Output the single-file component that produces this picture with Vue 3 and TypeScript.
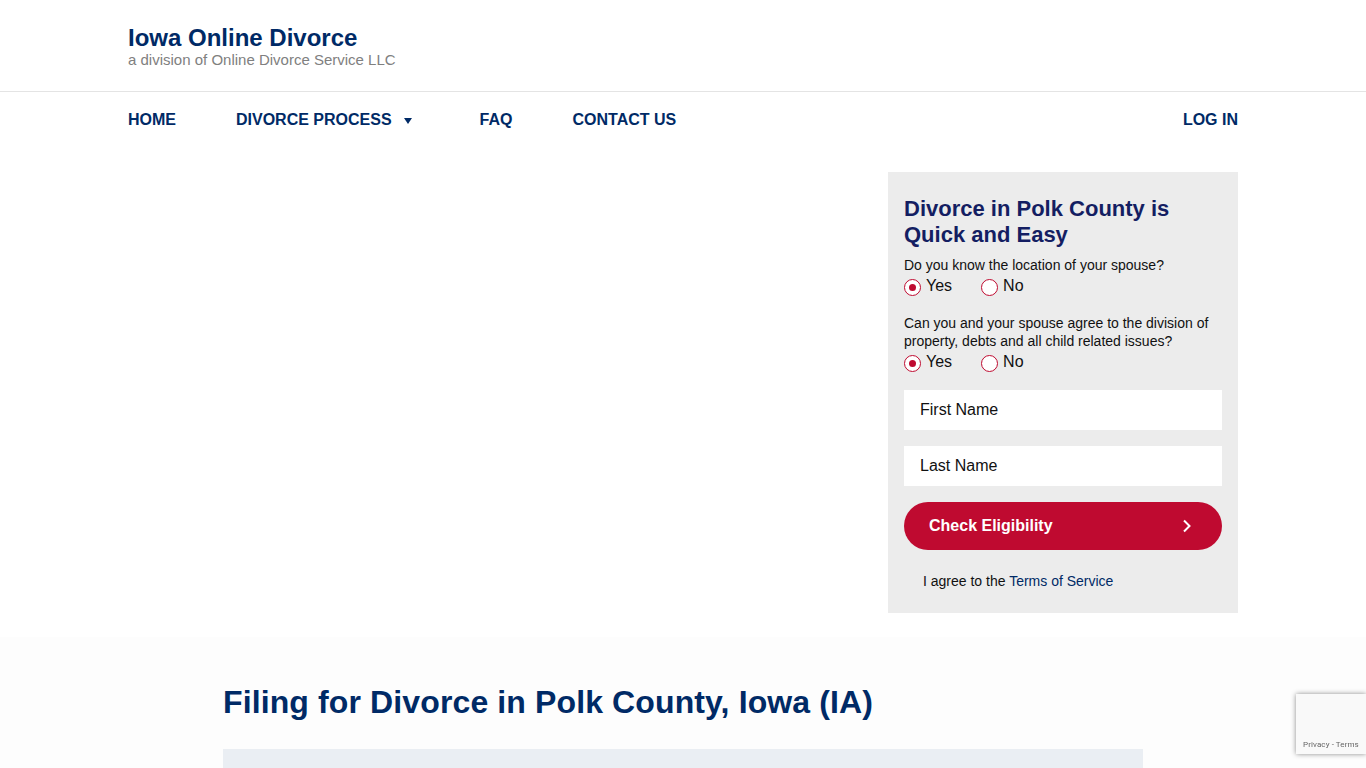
<script setup lang="ts">
const navLinks = [
  { label: "HOME", caret: false },
  { label: "DIVORCE PROCESS", caret: true },
  { label: "FAQ", caret: false },
  { label: "CONTACT US", caret: false },
];

const questions = [
  { text: "Do you know the location of your spouse?" },
  { text: "Can you and your spouse agree to the division of property, debts and all child related issues?" },
];
</script>

<template>
  <div class="page">
    <header class="brand-bar">
      <div class="container">
        <div class="brand-name">Iowa Online Divorce</div>
        <div class="brand-sub">a division of Online Divorce Service LLC</div>
      </div>
    </header>

    <nav class="nav">
      <div class="container nav-row">
        <ul class="nav-links">
          <li v-for="link in navLinks" :key="link.label" class="nav-link">
            {{ link.label }}
            <span v-if="link.caret" class="caret"></span>
          </li>
        </ul>
        <span class="nav-link">LOG IN</span>
      </div>
    </nav>

    <section class="hero">
      <div class="container hero-row">
        <form class="card" @submit.prevent>
          <h2 class="card-title">Divorce in Polk County is Quick and Easy</h2>
          <div v-for="(q, i) in questions" :key="i" class="question">
            <p class="q-text">{{ q.text }}</p>
            <div class="options">
              <label class="option">
                <span class="radio checked"></span>
                <span class="opt-label">Yes</span>
              </label>
              <label class="option">
                <span class="radio"></span>
                <span class="opt-label">No</span>
              </label>
            </div>
          </div>
          <div class="field">First Name</div>
          <div class="field">Last Name</div>
          <button class="submit" type="submit">
            <span>Check Eligibility</span>
            <svg width="10" height="14" viewBox="0 0 10 14" fill="none">
              <path d="M2 1.5 7.5 7 2 12.5" stroke="#fff" stroke-width="2" />
            </svg>
          </button>
          <p class="agree">I agree to the <a class="terms">Terms of Service</a></p>
        </form>
      </div>
    </section>

    <section class="content">
      <div class="content-inner">
        <h1 class="page-title">Filing for Divorce in Polk County, Iowa (IA)</h1>
        <div class="info-box"></div>
      </div>
    </section>

    <div class="recaptcha">
      <span class="recaptcha-links">Privacy - Terms</span>
    </div>
  </div>
</template>

<style>
html,
body {
  margin: 0;
  height: 100%;
  overflow: hidden;
  background: #fff;
}
</style>

<style scoped>
.page {
  font-family: "Liberation Sans", Arial, sans-serif;
  color: #000;
  height: 768px;
  overflow: hidden;
}

.container {
  width: 1110px;
  margin: 0 auto;
}

.brand-bar {
  height: 91px;
  border-bottom: 1px solid #e4e4e4;
  box-sizing: content-box;
}

.brand-bar .container {
  padding-top: 24px;
}

.brand-name {
  color: #002a66;
  font-size: 24px;
  font-weight: 700;
  line-height: 28px;
}

.brand-sub {
  color: #808080;
  font-size: 15px;
  line-height: 16px;
}

.nav-row {
  display: flex;
  justify-content: space-between;
  align-items: center;
  height: 54px;
}

.nav-links {
  display: flex;
  gap: 60px;
  list-style: none;
  margin: 0;
  padding: 0;
}

.nav-link {
  color: #002a66;
  font-size: 16px;
  font-weight: 700;
  line-height: 54px;
  padding-top: 1px;
  display: flex;
  align-items: center;
}

.caret {
  width: 0;
  height: 0;
  margin-left: 12px;
  margin-right: 8px;
  margin-top: 2px;
  border-left: 4px solid transparent;
  border-right: 4px solid transparent;
  border-top: 6px solid #002a66;
}

.hero {
  padding-top: 26px;
}

.hero-row {
  display: flex;
  justify-content: flex-end;
}

.card {
  width: 350px;
  height: 441px;
  box-sizing: border-box;
  background: #ececec;
  padding: 24px 16px 0;
}

.card-title {
  margin: 0;
  color: #141e62;
  font-size: 22px;
  font-weight: 700;
  line-height: 26px;
}

.question {
  margin-top: 8px;
  margin-bottom: 17px;
}

.q-text {
  margin: 0;
  font-size: 14px;
  line-height: 18px;
  color: #111;
}

.options {
  display: flex;
  gap: 29px;
  height: 23px;
}

.option {
  display: flex;
  gap: 5px;
}

.radio {
  width: 17px;
  height: 17px;
  box-sizing: border-box;
  margin-top: 5px;
  border: 1px solid #bf0a30;
  border-radius: 50%;
  background: #fff;
  display: flex;
  align-items: center;
  justify-content: center;
}

.radio.checked::after {
  content: "";
  width: 7px;
  height: 7px;
  border-radius: 50%;
  background: #bf0a30;
}

.opt-label {
  font-size: 16px;
  line-height: 18px;
  padding-top: 3px;
  color: #111;
}

.field {
  height: 40px;
  background: #fff;
  margin-bottom: 16px;
  padding-left: 16px;
  font-size: 16px;
  line-height: 40px;
  color: #111;
}

.submit {
  width: 318px;
  height: 48px;
  border: 0;
  border-radius: 24px;
  background: #bf0a30;
  color: #fff;
  font-family: inherit;
  font-size: 16px;
  font-weight: 700;
  display: flex;
  align-items: center;
  justify-content: space-between;
  padding: 0 30px 0 25px;
}

.agree {
  margin: 22px 0 0 19px;
  font-size: 14px;
  line-height: 18px;
  color: #111;
}

.terms {
  color: #002a66;
}

.content {
  margin-top: 24px;
  background: #fdfdfd;
  height: 200px;
}

.content-inner {
  width: 920px;
  margin: 0 auto;
  padding-top: 47px;
}

.page-title {
  margin: 0;
  color: #002a66;
  font-size: 32px;
  font-weight: 700;
  line-height: 36px;
  letter-spacing: 0.12px;
}

.info-box {
  margin-top: 29px;
  height: 100px;
  background: #eaeef3;
}

.recaptcha {
  position: fixed;
  right: 0;
  top: 694px;
  width: 70px;
  height: 60px;
  background: #f9f9f9;
  box-shadow: 0 0 5px rgba(0, 0, 0, 0.45);
  font-family: Roboto, "Liberation Sans", sans-serif;
}

.recaptcha-links {
  position: absolute;
  left: 7px;
  bottom: 4px;
  font-size: 8px;
  line-height: 10px;
  letter-spacing: 0.1px;
  color: #666;
  white-space: nowrap;
}
</style>
